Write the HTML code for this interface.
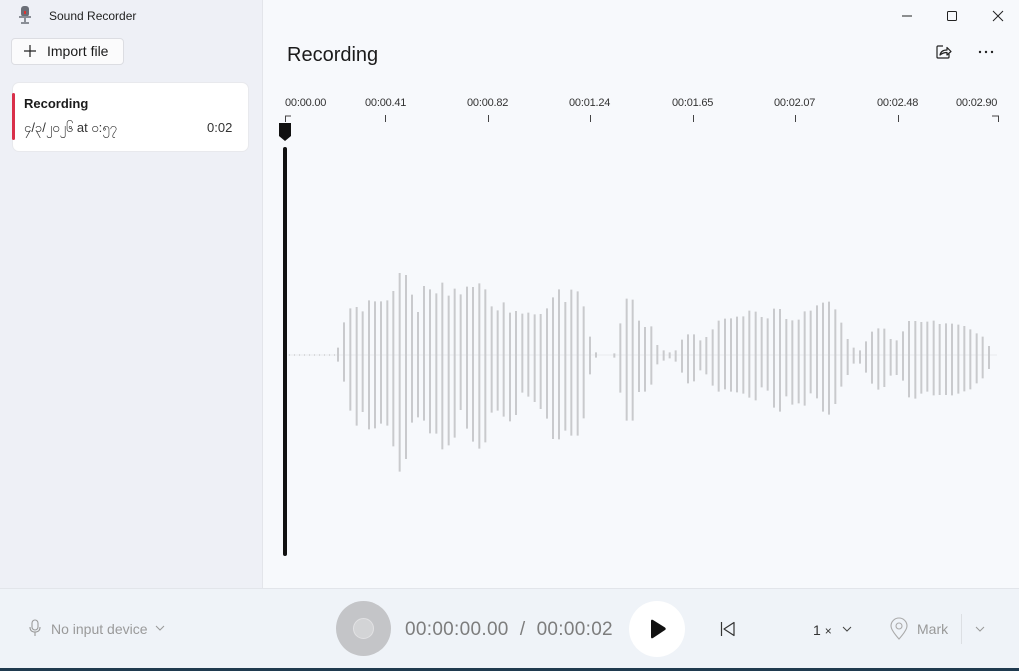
<!DOCTYPE html>
<html><head><meta charset="utf-8"><style>
*{margin:0;padding:0;box-sizing:border-box}
body{width:1019px;height:671px;overflow:hidden;font-family:"Liberation Sans","Noto Sans CJK SC",sans-serif;background:#f7f9fc;position:relative;color:#1b1b1b}
.abs{position:absolute}
#left{left:0;top:0;width:263px;height:588px;background:#eef0f6;border-right:1px solid #e3e5ea}
#bottom{left:0;top:588px;width:1019px;height:80px;background:#eff3f8;border-top:1px solid #e2e5ea}
#task{left:0;top:668px;width:1019px;height:3px;background:#1f3a4f}
.t{font-size:11px;color:#333;letter-spacing:-0.2px}
</style></head><body>
<div id="left" class="abs"></div>
<svg class="abs" style="left:18px;top:6px" width="14" height="18" viewBox="0 0 14 18"><rect x="3" y="0" width="8" height="11" rx="3" fill="#6b6f78"/><rect x="6" y="5" width="2" height="3" fill="#d33"/><rect x="1" y="10" width="12" height="2" fill="#8a8e96"/><rect x="6" y="12" width="2" height="4" fill="#8a8e96"/><rect x="3" y="16" width="8" height="2" fill="#8a8e96"/></svg>
<div class="abs" style="left:49px;top:9px;font-size:12px;color:#222">Sound Recorder</div>
<div class="abs" style="left:11px;top:38px;width:113px;height:27px;background:#fbfbfc;border:1px solid #dcdde2;border-radius:4px"></div>
<svg class="abs" style="left:23px;top:44px" width="14" height="14"><path d="M7 1V13M1 7H13" stroke="#222" stroke-width="1.2"/></svg>
<div class="abs" style="left:47px;top:43px;font-size:14px;color:#1b1b1b">Import file</div>
<div class="abs" style="left:12px;top:82px;width:237px;height:70px;background:#fff;border:1px solid #e8e9ed;border-radius:7px"></div>
<div class="abs" style="left:12px;top:93px;width:3px;height:47px;background:#d9304a;border-radius:2px"></div>
<div class="abs" style="left:24px;top:96px;font-size:13px;font-weight:bold;color:#1b1b1b">Recording</div>
<div class="abs" style="left:24px;top:120px;font-size:13px;color:#333">၄/၃/၂၀၂၆ at ၀:၅၇</div>
<div class="abs" style="left:207px;top:120px;font-size:13px;color:#333">0:02</div>
<svg class="abs" style="left:895px;top:8px" width="115" height="16"><path d="M7 8H17" stroke="#222" stroke-width="1"/><rect x="52.5" y="3.5" width="9" height="9" fill="none" stroke="#222" rx="1"/><path d="M98 3L108 13M108 3L98 13" stroke="#222"/></svg>
<div class="abs" style="left:287px;top:44px;font-size:20px;color:#1b1b1b">Recording</div>
<svg class="abs" style="left:935px;top:44px" width="18" height="16"><path d="M8 2H3Q2 2 2 3V13Q2 14 3 14H13Q14 14 14 13V10" fill="none" stroke="#222" stroke-width="1.2"/><path d="M5 11Q6 6 12 6V3.5L16 7.5L12 11V8.5Q8 8.5 5 11Z" fill="none" stroke="#222" stroke-width="1.2" stroke-linejoin="round"/></svg>
<svg class="abs" style="left:978px;top:50px" width="16" height="4"><circle cx="2" cy="2" r="1.2" fill="#222"/><circle cx="8" cy="2" r="1.2" fill="#222"/><circle cx="14" cy="2" r="1.2" fill="#222"/></svg>
<div class="abs t" style="left:285px;top:97px">00:00.00</div>
<div class="abs t" style="left:365px;top:97px">00:00.41</div>
<div class="abs t" style="left:467px;top:97px">00:00.82</div>
<div class="abs t" style="left:569px;top:97px">00:01.24</div>
<div class="abs t" style="left:672px;top:97px">00:01.65</div>
<div class="abs t" style="left:774px;top:97px">00:02.07</div>
<div class="abs t" style="left:877px;top:97px">00:02.48</div>
<div class="abs t" style="left:956px;top:97px">00:02.90</div>
<svg class="abs" style="left:0;top:0" width="1019" height="588">
<path d="M285.5 122V116H291M385.5 115V122M488.5 115V122M590.5 115V122M693.5 115V122M795.5 115V122M898.5 115V122M992 116H998.5V122" fill="none" stroke="#444" stroke-width="1"/>
<path d="M279 123H291V136L285 141L279 136Z" fill="#111"/>
<rect x="283" y="147" width="4" height="409" rx="2" fill="#111"/>
<path d="M288 355H997" stroke="#e8eaee" stroke-width="1"/>
<path d="M289 355H336" stroke="#bbb" stroke-width="1" stroke-dasharray="1 4"/>
</svg>
<svg class="abs" style="left:330px;top:265px" width="340" height="210" viewBox="0 0 1020 630"><path fill="none" stroke="#c9cacd" stroke-width="6" d="M24 248V290M42 172V350M61 130V437M80 126V482M98 139V441M117 106V493M135 109V490M153 109V476M172 106V482M190 78V544M209 24V620M228 30V582M246 89V473M264 141V457M282 63V467M300 73V505M319 85V506M337 53V553M356 92V541M374 71V518M392 88V435M411 65V491M429 66V530M448 55V551M466 73V532M485 124V443M503 136V437M521 112V455M540 143V469M558 138V450M577 146V383M595 143V395M614 148V411M632 147V432M651 130V461M669 97V522M687 73V523M706 111V497M724 74V512M743 79V512M761 124V460M780 215V328M798 262V278M853 265V278M871 175V383M890 101V467M908 104V467M927 167V381M945 186V380M964 184V359M982 240V298M1001 256V287"/></svg>
<svg class="abs" style="left:665px;top:265px" width="340" height="210" viewBox="0 0 1020 630"><path fill="none" stroke="#c9cacd" stroke-width="6" d="M14 262V280M32 256V290M51 224V323M69 208V355M87 208V349M106 226V316M124 216V328M143 193V362M161 167V380M180 161V373M198 160V380M216 155V382M235 154V386M253 137V398M272 140V406M290 156V367M308 160V377M327 131V428M345 132V440M364 162V394M382 166V419M401 164V415M419 139V422M437 137V385M456 121V400M474 113V440M492 110V449M511 133V417M529 173V365M548 222V330M566 248V296M585 256V296M603 229V323M621 200V356M640 190V374M658 191V366M677 222V332M695 226V330M714 199V347M732 168V397M751 168V401M769 171V386M787 170V380M806 167V391M824 177V390M843 175V390M861 176V391M880 179V386M898 183V379M916 193V373M935 205V355M953 215V340M972 243V312"/></svg>
<div id="bottom" class="abs"></div>
<div id="task" class="abs"></div>
<svg class="abs" style="left:28px;top:619px" width="14" height="18"><rect x="4" y="1" width="6" height="10" rx="3" fill="none" stroke="#999" stroke-width="1.1"/><path d="M2 8Q2 13 7 13Q12 13 12 8M7 13V17" fill="none" stroke="#999" stroke-width="1.1"/></svg>
<div class="abs" style="left:51px;top:621px;font-size:14px;color:#9a9a9a">No input device</div>
<svg class="abs" style="left:155px;top:625px" width="10" height="6"><path d="M1 1L5 5L9 1" fill="none" stroke="#999"/></svg>
<div class="abs" style="left:336px;top:601px;width:55px;height:55px;border-radius:50%;background:#c4c5c8"></div>
<div class="abs" style="left:353px;top:618px;width:21px;height:21px;border-radius:50%;background:#d3d4d6;border:1px solid #e2e2e4"></div>
<div class="abs" style="left:405px;top:619px;font-size:19px;color:#7d7d7d;letter-spacing:0.3px">00:00:00.00 &nbsp;/ &nbsp;00:00:02</div>
<div class="abs" style="left:629px;top:601px;width:56px;height:56px;border-radius:50%;background:#fff"></div>
<svg class="abs" style="left:649px;top:619px" width="18" height="20"><path d="M2 2Q2 0 4 1L16 8.5Q17.5 10 16 11L4 19Q2 20 2 18Z" fill="#111"/></svg>
<svg class="abs" style="left:720px;top:621px" width="16" height="16"><path d="M1.5 1V15" stroke="#333" stroke-width="1.2"/><path d="M14 1.5V14.5L4 8Z" fill="none" stroke="#333" stroke-width="1.2" stroke-linejoin="round"/></svg>
<div class="abs" style="left:813px;top:622px;font-size:14px;color:#333">1 <span style="font-size:12px">×</span></div>
<svg class="abs" style="left:842px;top:626px" width="10" height="6"><path d="M1 1L5 5L9 1" fill="none" stroke="#444"/></svg>
<svg class="abs" style="left:889px;top:617px" width="20" height="24"><path d="M10 22Q2 13 2 9A8 8 0 0 1 18 9Q18 13 10 22Z" fill="none" stroke="#aaa" stroke-width="1.1"/><circle cx="10" cy="9" r="3" fill="none" stroke="#aaa" stroke-width="1.1"/></svg>
<div class="abs" style="left:917px;top:621px;font-size:14px;color:#999">Mark</div>
<div class="abs" style="left:961px;top:614px;width:1px;height:30px;background:#dcdfe3"></div>
<svg class="abs" style="left:975px;top:626px" width="10" height="6"><path d="M1 1L5 5L9 1" fill="none" stroke="#999"/></svg>
</body></html>
